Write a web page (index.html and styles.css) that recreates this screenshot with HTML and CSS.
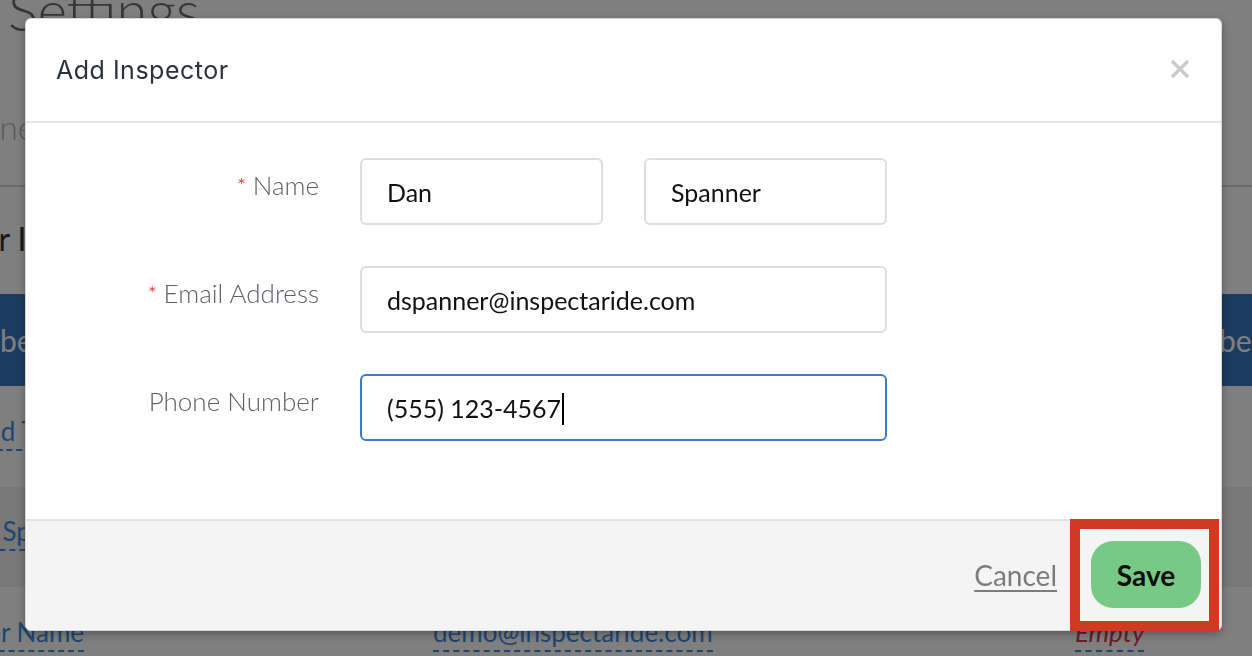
FILE: index.html
```html
<!DOCTYPE html>
<html lang="en">
<head>
  <meta charset="UTF-8" />
  <title>Settings - Add Inspector</title>
  <link rel="stylesheet" href="styles.css">
</head>
<body>
  <!-- PAGE UNDER THE DIALOG -->
  <div class="page">
    <header class="page-head">
      <h1 class="page-title">Settings</h1>
      <div class="page-sub">Phone &amp; notifications</div>
    </header>

    <section class="inspectors">
      <h2 class="section-title">Your Inspectors</h2>
      <div class="table">
        <div class="tr th">
          <div class="th-first">Number</div><div>Email Address</div><div class="th-last">Phone Number</div>
        </div>
        <div class="tr">
          <div><a class="editable">David Tran</a></div>
          <div><a class="editable">dtran@inspectaride.com</a></div>
          <div><a class="editable">(555) 987-1122</a></div>
        </div>
        <div class="tr alt">
          <div><a class="editable">Dan Spanner</a></div>
          <div><a class="editable">dspanner@inspectaride.com</a></div>
          <div><a class="editable">(555) 123-4567</a></div>
        </div>
        <div class="tr">
          <div><a class="editable">Enter Name</a></div>
          <div><a class="editable">demo@inspectaride.com</a></div>
          <div><a class="editable empty">Empty</a></div>
        </div>
      </div>
    </section>
  </div>

  <div class="backdrop"></div>

  <!-- ADD INSPECTOR DIALOG -->
  <div class="modal" role="dialog" aria-label="Add Inspector">
    <div class="modal-header">
      <h3 class="modal-title">Add Inspector</h3>
      <button class="close" aria-label="Close">
        <svg width="20" height="20" viewBox="0 0 20 20">
          <path d="M2 2 L18 18 M18 2 L2 18" stroke="#cacaca" stroke-width="3.2" stroke-linecap="butt"/>
        </svg>
      </button>
    </div>

    <div class="modal-body">
      <div class="label"><span class="req">*</span>Name</div>
      <div class="field">Dan</div>
      <div class="field">Spanner</div>

      <div class="label"><span class="req">*</span>Email Address</div>
      <div class="field wide">dspanner@inspectaride.com</div>

      <div class="label">Phone Number</div>
      <div class="field wide focus">(555) 123-4567<span class="caret"></span></div>
    </div>

    <div class="modal-footer">
      <a class="cancel">Cancel</a>
      <span class="save-wrap">
        <button class="save">Save</button>
      </span>
    </div>
  </div>
</body>
</html>
```

FILE: styles.css
```css
/* RESET & BASE */
* { margin:0; padding:0; box-sizing:border-box; }
html, body { height:100%; overflow:hidden; }
body { font-family:'Lato','Open Sans',sans-serif; background:#fff; color:#222; }
a { color:inherit; text-decoration:none; }
button { font-family:inherit; border:none; background:none; cursor:pointer; }

/* PAGE BEHIND */
.page-head {
  padding-bottom:38px;
  border-bottom:2px solid #d4d4d4;
}
.page-title {
  font-size:56px; line-height:60px; font-weight:300; color:#6c6c6c;
  margin-top:-20px; padding-left:8px;
}
.page-sub {
  font-size:34px; line-height:40px; font-weight:300; color:#b8b8b8;
  margin-top:67px; margin-left:-58px;
}
.inspectors { margin-left:-54px; }
.section-title {
  font-size:32px; line-height:44px; font-weight:400; color:#333;
  margin-top:30px;
}
.table { margin-top:33px; margin-left:3px; }
.tr {
  display:grid; grid-template-columns:484px 642px 1fr;
  height:101px; align-items:center; padding-bottom:12px;
  font-size:26px;
}
.tr.alt { background:#f0f0f0; height:100px; }
.tr.th {
  height:92px; background:#3876c0; color:#fff;
  font-size:30px; font-weight:400; padding-bottom:0;
  white-space:nowrap;
}
.th-first { margin-left:-13px; }
.th-last { margin-left:-12px; }
.editable {
  color:#3c8ce6;
  border-bottom:2px dashed #3c8ce6;
  padding-bottom:2px;
}
.editable.empty { color:#dc3454; font-style:italic; }

.backdrop {
  position:fixed; inset:0; background:rgba(0,0,0,0.5);
}

/* MODAL */
.modal {
  position:absolute; left:25px; top:18px; width:1197px; height:613px;
  background:#fff; border:1px solid #d6d6d6; border-radius:6px;
  box-shadow:0 3px 8px rgba(0,0,0,0.3);
  display:flex; flex-direction:column;
}
.modal-header {
  height:104px; flex:none;
  display:flex; align-items:center; justify-content:space-between;
  padding:0 31px 0 30px;
  border-bottom:2px solid #e5e5e5;
}
.modal-title {
  font-family:'Inter','Liberation Sans',sans-serif;
  font-size:25px; font-weight:400; color:#2a3241; letter-spacing:0.5px;
}
.close { display:flex; width:20px; height:20px; margin-top:-2px; }

.modal-body {
  flex:1;
  display:grid; grid-template-columns:293px 243px 243px;
  grid-auto-rows:67px; column-gap:41px; row-gap:41px;
  padding-top:35px;
}
.label {
  text-align:right; padding-top:11px;
  font-size:26px; font-weight:300; color:#5d6168;
}
.req {
  color:#e2483d; font-size:20px; font-weight:400;
  margin-right:7px; position:relative; top:-3px;
}
.field {
  display:flex; align-items:center;
  border:2px solid #dedede; border-radius:6px;
  padding:0 25px;
  font-size:25px; color:#111;
}
.field.wide { grid-column:span 2; }
.field.focus { border-color:#3b7bc8; }
.caret {
  display:inline-block; width:2px; height:32px; background:#000;
  margin-left:1px; position:relative; top:1px;
}

/* FOOTER */
.modal-footer {
  height:111px; flex:none;
  background:#f4f4f4; border-top:2px solid #e2e2e2;
  border-radius:0 0 6px 6px;
  display:flex; justify-content:flex-end; align-items:flex-start;
  gap:34px; padding:20px 20px 0;
}
.cancel {
  height:67px; display:flex; align-items:center;
  font-size:28px; color:#7c7c7c;
  text-decoration:underline; text-decoration-thickness:2px; text-underline-offset:4px;
}
.save-wrap { position:relative; display:flex; }
.save {
  width:110px; height:67px; border-radius:22px;
  background:#77c985; color:#0d0d0d;
  font-size:28px; font-weight:700;
}
/* highlight marker drawn over the save button */
.save-wrap::after {
  content:''; position:absolute;
  top:-22px; right:-18px; bottom:-23px; left:-21px;
  border:10px solid #cf3a21;
}
```
